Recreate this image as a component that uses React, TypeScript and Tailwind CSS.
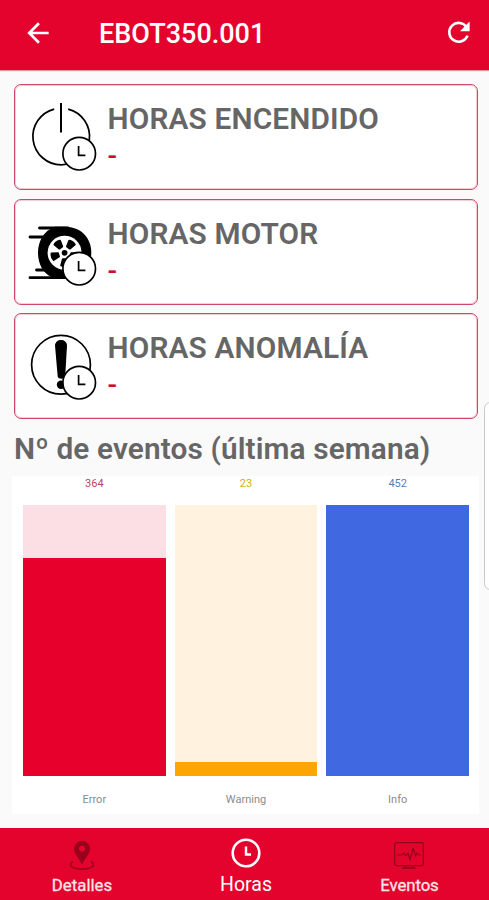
import type { ReactNode } from 'react';
import { MdArrowBack } from 'react-icons/md';

interface HoursCardProps {
  title: string;
  value: string;
  children: ReactNode;
}

const ClockBadge = () => (
  <>
    <circle cx="51.2" cy="51.7" r="16.3" fill="white" stroke="black" strokeWidth="1.7" />
    <path d="M50.6 44v9.4h6.8" fill="none" stroke="black" strokeWidth="1.7" />
  </>
);

const PowerIcon = () => (
  <>
    <path
      d="M26.2 7.1A28.3 28.3 0 1 0 61.3 38M40.2 7.1A28.3 28.3 0 0 1 61.3 38"
      fill="none"
      stroke="black"
      strokeWidth="1.7"
    />
    <path d="M33 1v29.5" stroke="black" strokeWidth="2" />
  </>
);

const WheelIcon = () => (
  <>
    <path
      d="M11.5 11H40M2 20h20M8.5 53H30M2 60.7h38"
      stroke="black"
      strokeWidth="2.8"
      strokeLinecap="round"
    />
    <path d="M27 9.7h10C53 9.7 63.3 21 63.3 35.5S53 62 37 62h-8L23 60C14 55 10 46 10 35.5 10 25 15 14 27 9.7Z" fill="black" />
    <circle cx="36.6" cy="35.8" r="17" fill="white" />
    {[36, 108, 180, 252, 324].map(angle => (
      <path
        key={angle}
        d="M33.1 23.2q3.5-1.8 7 0l-1.7 6.2h-3.6Z"
        fill="black"
        stroke="black"
        strokeWidth="1.8"
        strokeLinejoin="round"
        transform={`rotate(${angle} 36.6 35.8)`}
      />
    ))}
    <circle cx="36.6" cy="35.8" r="2.9" fill="black" />
  </>
);

const AlertIcon = () => (
  <>
    <circle cx="33" cy="33.8" r="29.4" fill="none" stroke="black" strokeWidth="1.7" />
    <path d="M27 14.5c0-7.5 12-7.5 12 0L37.2 45.5c-.5 3-7 3-7.5 0Z" fill="black" />
    <circle cx="33" cy="53.8" r="4.2" fill="black" />
  </>
);

const HoursCard = ({ title, value, children }: HoursCardProps) => (
  <section className="flex h-[106px] rounded-[7px] border border-[#cf4767] bg-white pt-[17px] pl-[13px] shadow-[inset_0_0_0_1px_#f3ced7]">
    <svg className="size-[72px] shrink-0" viewBox="0 0 72 72">
      {children}
      <ClockBadge />
    </svg>
    <div className="-mt-px ml-[7.5px]">
      <h2 className="text-[29.8px] leading-[35px] font-semibold tracking-[0.15px] whitespace-nowrap text-[#666]">{title}</h2>
      <p className="text-[28px] leading-[40px] font-medium text-[#cb0f2b]">{value}</p>
    </div>
  </section>
);

const bars = [
  { label: 'Error', count: 364, fill: 80.5, text: 'text-[#bd4564]', track: 'bg-[#fbdfe5]', bar: 'bg-[#e6002b]' },
  { label: 'Warning', count: 23, fill: 5, text: 'text-[#d8ac24]', track: 'bg-[#fff2df]', bar: 'bg-[#fca503]' },
  { label: 'Info', count: 452, fill: 100, text: 'text-[#5b7fba]', track: 'bg-[#dfe6fb]', bar: 'bg-[#4068e1]' },
];

const EventsChart = () => (
  <div className="mr-[10px] ml-[12px] grid h-[338px] grid-cols-3 gap-[9px] bg-white pr-[10px] pl-[11px] text-center text-[11px]">
    {bars.map(({ label, count, fill, text, track, bar }) => (
      <div key={label}>
        <p className={`h-[29px] leading-[15px] ${text}`}>{count}</p>
        <div className={`flex h-[271px] items-end ${track}`}>
          <div className={`w-full ${bar}`} style={{ height: `${fill}%` }} />
        </div>
        <p className="pt-[16px] leading-[15px] text-[#8b8b8b]">{label}</p>
      </div>
    ))}
  </div>
);

const BottomNav = () => (
  <nav className="mt-auto flex h-[72px] justify-between bg-[#e4032c] text-[#fde4e8]">
    <div className="flex w-[164px] flex-col items-center pt-[12px]">
      <svg className="h-[32px] w-[26px]" viewBox="0 0 26 32" fill="none">
        <path
          d="M13 24.5C10.5 19 5 14 5 8.8a8 8 0 0 1 16 0C21 14 15.5 19 13 24.5Z M13 5.7a3 3 0 1 0 0 6 3 3 0 0 0 0-6Z"
          fill="#98001c"
          fillRule="evenodd"
        />
        <path d="M4 21.5c-6 4 0 7.5 9 7.5s15-3.5 9-7.5" stroke="#a8001f" strokeWidth="2" />
      </svg>
      <span className="mt-[3px] text-[16.8px] leading-[20px] [-webkit-text-stroke:0.3px]">Detalles</span>
    </div>
    <div className="flex w-[164px] flex-col items-center pt-[9px] text-white">
      <svg className="size-[32px]" viewBox="0 0 32 32" fill="none" stroke="currentColor">
        <circle cx="16" cy="16" r="13.3" strokeWidth="2.6" />
        <path d="M16 9.5v8h5" strokeWidth="2.4" />
      </svg>
      <span className="mt-[4px] text-[19.5px] leading-[23px]">Horas</span>
    </div>
    <div className="flex w-[161px] flex-col items-center pt-[12px]">
      <svg className="h-[32px] w-[32px]" viewBox="0 0 32 32" fill="none" stroke="#8f061f">
        <rect x="1.7" y="2.7" width="28.6" height="23" rx="2" strokeWidth="1.2" />
        <path d="M4 15h5l2-2 2 3 2-3 2 7 3-12 2.5 8 1.5-3 1.5 2H28" strokeWidth="1.1" strokeLinejoin="round" />
        <path d="M11.5 26v1.5h9V26M9 28.3h14" strokeWidth="1.1" />
      </svg>
      <span className="mt-[3px] mr-[-2px] text-[16.8px] leading-[20px] tracking-[-0.1px] [-webkit-text-stroke:0.3px]">Eventos</span>
    </div>
  </nav>
);

const App = () => {
  return (
    <div className="relative flex h-[900px] w-full flex-col overflow-hidden bg-[#fafafa] font-[Roboto,sans-serif]">
      <header className="flex h-[70px] shrink-0 items-center bg-[#e4032c] pr-[15px] pb-[5px] pl-[22px] text-white shadow-[0_1px_1px_#d997a3]">
        <MdArrowBack className="size-[32px]" />
        <h1 className="ml-[45px] pt-[3px] text-[27px] font-medium">EBOT350.001</h1>
        <svg className="ml-auto size-[31px]" viewBox="0 0 31 31" fill="none">
          <path d="M23.6 10.2A9.4 9.4 0 1 0 24.5 18.6" stroke="currentColor" strokeWidth="2.6" />
          <path d="M26.6 4.5v9.8H17Z" fill="currentColor" />
        </svg>
      </header>
      <main>
        <div className="flex flex-col gap-[8.5px] pt-[14px] pr-[11px] pl-[14px]">
          <HoursCard title="HORAS ENCENDIDO" value="-">
            <PowerIcon />
          </HoursCard>
          <HoursCard title="HORAS MOTOR" value="-">
            <WheelIcon />
          </HoursCard>
          <HoursCard title="HORAS ANOMALÍA" value="-">
            <AlertIcon />
          </HoursCard>
        </div>
        <h2 className="h-[57px] pt-[12px] pl-[14px] text-[29.8px] leading-[36px] font-semibold tracking-[0.12px] whitespace-nowrap text-[#666]">
          Nº de eventos (última semana)
        </h2>
        <EventsChart />
      </main>
      <BottomNav />
      {/* edge panel handle */}
      <div className="absolute top-[402px] -right-[8px] h-[188px] w-[13px] rounded-[7px] border border-[#c9c9c9] bg-white" />
    </div>
  );
};

export default App;
